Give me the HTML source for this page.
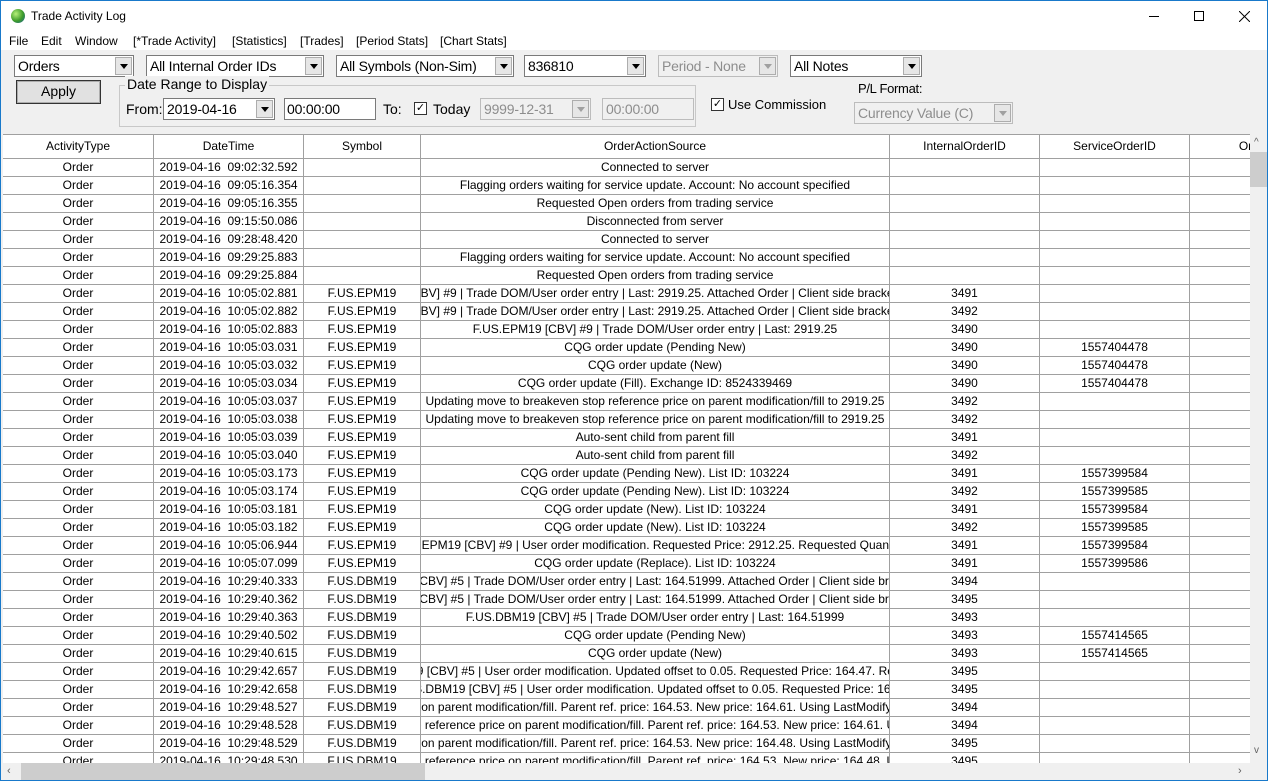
<!DOCTYPE html>
<html><head><meta charset="utf-8">
<style>
*{box-sizing:border-box;margin:0;padding:0}
body{width:1268px;height:781px;overflow:hidden;background:#f0f0f0;font-family:"Liberation Sans",sans-serif;position:relative;border:1px solid #1979ca;}
.abs{position:absolute}
.title{left:0;top:0;width:1266px;height:32px;background:#fff}
.menu{left:0;top:32px;width:1266px;height:17px;background:#fff;font-size:12px}
.menu span{position:absolute;top:1px}
.combo{position:absolute;height:22px;background:#fff;border:1px solid #7a7a7a;font-size:14px;line-height:20px;padding-left:3px;white-space:nowrap;overflow:hidden;letter-spacing:-0.2px}
.combo .btn{position:absolute;right:1px;top:1px;width:17px;height:18px;background:#e6e6e6;border:1px solid #adadad}
.combo .btn:after{content:"";position:absolute;left:4px;top:6px;border-left:4px solid transparent;border-right:4px solid transparent;border-top:5px solid #000}
.dis{background:#f0f0f0;color:#8d8d8d;border-color:#bcbcbc}
.dis .btn:after{border-top-color:#a0a0a0}
.lbl{position:absolute;font-size:14px;white-space:nowrap}
.chk{position:absolute;width:13px;height:13px;border:1px solid #333;background:#fff;font-size:11px;line-height:11px;text-align:center}
.grid{left:2px;top:133px;width:1247px;height:629px;background:#fff;overflow:hidden;border-top:1px solid #a0a0a0}
.row{position:absolute;left:0;height:18px;font-size:12px;line-height:17px;border-bottom:1px solid #a0a0a0;white-space:nowrap}
.c{position:absolute;top:0;height:17px;display:flex;justify-content:center;overflow:hidden;border-right:1px solid #a0a0a0}
.hdr{height:24px;line-height:23px}
.hdr .c{height:23px}
</style></head><body>
<div class="abs title">
 <div class="abs" style="left:10px;top:8px;width:14px;height:14px;border-radius:50%;background:radial-gradient(circle at 35% 35%,#b6f07a,#3d9b2a 55%,#1a5fa0)"></div>
 <div class="abs" style="left:30px;top:8px;font-size:12px">Trade Activity Log</div>
 <div class="abs" style="left:1148px;top:15px;width:10px;height:1px;background:#000"></div>
 <div class="abs" style="left:1193px;top:10px;width:10px;height:10px;border:1px solid #000"></div>
 <svg class="abs" style="left:1238px;top:10px" width="11" height="11"><path d="M0 0L11 11M11 0L0 11" stroke="#000" stroke-width="1"/></svg>
</div>
<div class="abs menu">
 <span style="left:8px">File</span><span style="left:40px">Edit</span><span style="left:74px">Window</span><span style="left:132px">[*Trade Activity]</span><span style="left:231px">[Statistics]</span><span style="left:299px">[Trades]</span><span style="left:355px">[Period Stats]</span><span style="left:439px">[Chart Stats]</span>
</div>
<div class="combo" style="left:13px;top:54px;width:120px">Orders<div class="btn"></div></div>
<div class="combo" style="left:145px;top:54px;width:178px">All Internal Order IDs<div class="btn"></div></div>
<div class="combo" style="left:335px;top:54px;width:178px">All Symbols (Non-Sim)<div class="btn"></div></div>
<div class="combo" style="left:523px;top:54px;width:122px">836810<div class="btn"></div></div>
<div class="combo dis" style="left:657px;top:54px;width:120px">Period - None<div class="btn"></div></div>
<div class="combo" style="left:789px;top:54px;width:132px">All Notes<div class="btn"></div></div>
<div class="abs" style="left:15px;top:79px;width:85px;height:24px;background:#e1e1e1;border:1px solid #333;box-shadow:inset 0 0 0 1px #adadad;font-size:14px;text-align:center;line-height:21px">Apply</div>
<div class="abs" style="left:118px;top:84px;width:577px;height:42px;border:1px solid #c8c8c8"></div>
<div class="lbl" style="left:124px;top:75px;background:#f0f0f0;padding:0 2px">Date Range to Display</div>
<div class="lbl" style="left:125px;top:100px">From:</div>
<div class="combo" style="left:162px;top:97px;width:112px">2019-04-16<div class="btn"></div></div>
<div class="combo" style="left:283px;top:97px;width:92px;padding-left:2px">00:00:00</div>
<div class="lbl" style="left:382px;top:100px">To:</div>
<div class="chk" style="left:413px;top:101px">✓</div>
<div class="lbl" style="left:432px;top:100px">Today</div>
<div class="combo dis" style="left:479px;top:97px;width:111px">9999-12-31<div class="btn"></div></div>
<div class="combo dis" style="left:601px;top:97px;width:92px">00:00:00</div>
<div class="chk" style="left:710px;top:97px">✓</div>
<div class="lbl" style="left:727px;top:96px;font-size:13px">Use Commission</div>
<div class="lbl" style="left:857px;top:80px;font-size:13px;letter-spacing:-0.3px">P/L Format:</div>
<div class="combo dis" style="left:853px;top:101px;width:159px">Currency Value (C)<div class="btn"></div></div>

<div class="abs grid" id="g"></div>
<div class="abs" style="left:1249px;top:134px;width:17px;height:628px;background:#f0f0f0">
 <div class="abs" style="left:0;top:17px;width:17px;height:35px;background:#cdcdcd"></div>
 <div class="abs" style="left:4px;top:2px;font-size:10px;color:#606060">^</div>
 <div class="abs" style="left:4px;top:610px;font-size:10px;color:#606060">v</div>
</div>
<div class="abs" style="left:2px;top:762px;width:1264px;height:17px;background:#f0f0f0">
 <div class="abs" style="left:18px;top:0;width:404px;height:17px;background:#cdcdcd"></div>
 <div class="abs" style="left:4px;top:2px;font-size:11px;color:#606060">‹</div>
 <div class="abs" style="left:1235px;top:2px;font-size:11px;color:#606060">›</div>
</div>
<script>
var W=[151,150,117,469,150,150,112];
var X=[0];for(var i=0;i<W.length;i++)X.push(X[i]+W[i]);
var hd=["ActivityType","DateTime","Symbol","OrderActionSource","InternalOrderID","ServiceOrderID","Or"];
var R=[
["09:02:32.592","","Connected to server","",""],
["09:05:16.354","","Flagging orders waiting for service update. Account: No account specified","",""],
["09:05:16.355","","Requested Open orders from trading service","",""],
["09:15:50.086","","Disconnected from server","",""],
["09:28:48.420","","Connected to server","",""],
["09:29:25.883","","Flagging orders waiting for service update. Account: No account specified","",""],
["09:29:25.884","","Requested Open orders from trading service","",""],
["10:05:02.881","F.US.EPM19","F.US.EPM19 [CBV]  #9 | Trade DOM/User order entry | Last: 2919.25. Attached Order | Client side bracket order | Parent","3491",""],
["10:05:02.882","F.US.EPM19","F.US.EPM19 [CBV]  #9 | Trade DOM/User order entry | Last: 2919.25. Attached Order | Client side bracket order | Parent","3492",""],
["10:05:02.883","F.US.EPM19","F.US.EPM19 [CBV]  #9 | Trade DOM/User order entry | Last: 2919.25","3490",""],
["10:05:03.031","F.US.EPM19","CQG order update (Pending New)","3490","1557404478"],
["10:05:03.032","F.US.EPM19","CQG order update (New)","3490","1557404478"],
["10:05:03.034","F.US.EPM19","CQG order update (Fill). Exchange ID: 8524339469","3490","1557404478"],
["10:05:03.037","F.US.EPM19","Updating move to breakeven stop reference price on parent modification/fill to 2919.25","3492",""],
["10:05:03.038","F.US.EPM19","Updating move to breakeven stop reference price on parent modification/fill to 2919.25","3492",""],
["10:05:03.039","F.US.EPM19","Auto-sent child from parent fill","3491",""],
["10:05:03.040","F.US.EPM19","Auto-sent child from parent fill","3492",""],
["10:05:03.173","F.US.EPM19","CQG order update (Pending New). List ID: 103224","3491","1557399584"],
["10:05:03.174","F.US.EPM19","CQG order update (Pending New). List ID: 103224","3492","1557399585"],
["10:05:03.181","F.US.EPM19","CQG order update (New). List ID: 103224","3491","1557399584"],
["10:05:03.182","F.US.EPM19","CQG order update (New). List ID: 103224","3492","1557399585"],
["10:05:06.944","F.US.EPM19","F.US.EPM19 [CBV]  #9 | User order modification. Requested Price: 2912.25. Requested Quantity: 1","3491","1557399584"],
["10:05:07.099","F.US.EPM19","CQG order update (Replace). List ID: 103224","3491","1557399586"],
["10:29:40.333","F.US.DBM19","F.US.DBM19 [CBV]  #5 | Trade DOM/User order entry | Last: 164.51999. Attached Order | Client side bracket order | P","3494",""],
["10:29:40.362","F.US.DBM19","F.US.DBM19 [CBV]  #5 | Trade DOM/User order entry | Last: 164.51999. Attached Order | Client side bracket order | P","3495",""],
["10:29:40.363","F.US.DBM19","F.US.DBM19 [CBV]  #5 | Trade DOM/User order entry | Last: 164.51999","3493",""],
["10:29:40.502","F.US.DBM19","CQG order update (Pending New)","3493","1557414565"],
["10:29:40.615","F.US.DBM19","CQG order update (New)","3493","1557414565"],
["10:29:42.657","F.US.DBM19","F.US.DBM19 [CBV]  #5 | User order modification. Updated offset to 0.05. Requested Price: 164.47. Requested Qu","3495",""],
["10:29:42.658","F.US.DBM19","F.US.DBM19 [CBV]  #5 | User order modification. Updated offset to 0.05. Requested Price: 164.47","3495",""],
["10:29:48.527","F.US.DBM19","Updating move to breakeven stop on parent modification/fill. Parent ref. price: 164.53. New price: 164.61. Using LastModifyQuantity of 0. Using new provided","3494",""],
["10:29:48.528","F.US.DBM19","Updating move to breakeven stop reference price on parent modification/fill. Parent ref. price: 164.53. New price: 164.61. Using LastModifyQuantity of 0. Us","3494",""],
["10:29:48.529","F.US.DBM19","Updating move to breakeven stop on parent modification/fill. Parent ref. price: 164.53. New price: 164.48. Using LastModifyQuantity of 0. Using new provided","3495",""],
["10:29:48.530","F.US.DBM19","Updating move to breakeven stop reference price on parent modification/fill. Parent ref. price: 164.53. New price: 164.48. Using LastModifyQuantity of 0. Us","3495",""]
];
var g=document.getElementById('g'),h='';
function row(cells,top,cls){var s='<div class="row '+(cls||'')+'" style="top:'+top+'px;width:'+X[7]+'px">';
for(var i=0;i<7;i++)s+='<div class="c" style="left:'+X[i]+'px;width:'+W[i]+'px"><span>'+(cells[i]||'')+'</span></div>';return s+'</div>';}
h+=row(hd,0,'hdr');
for(var r=0;r<R.length;r++){var d=R[r];h+=row(["Order","2019-04-16&nbsp;&nbsp;"+d[0],d[1],d[2],d[3],d[4],""],24+18*r);}
g.innerHTML=h;
</script>
</body></html>
